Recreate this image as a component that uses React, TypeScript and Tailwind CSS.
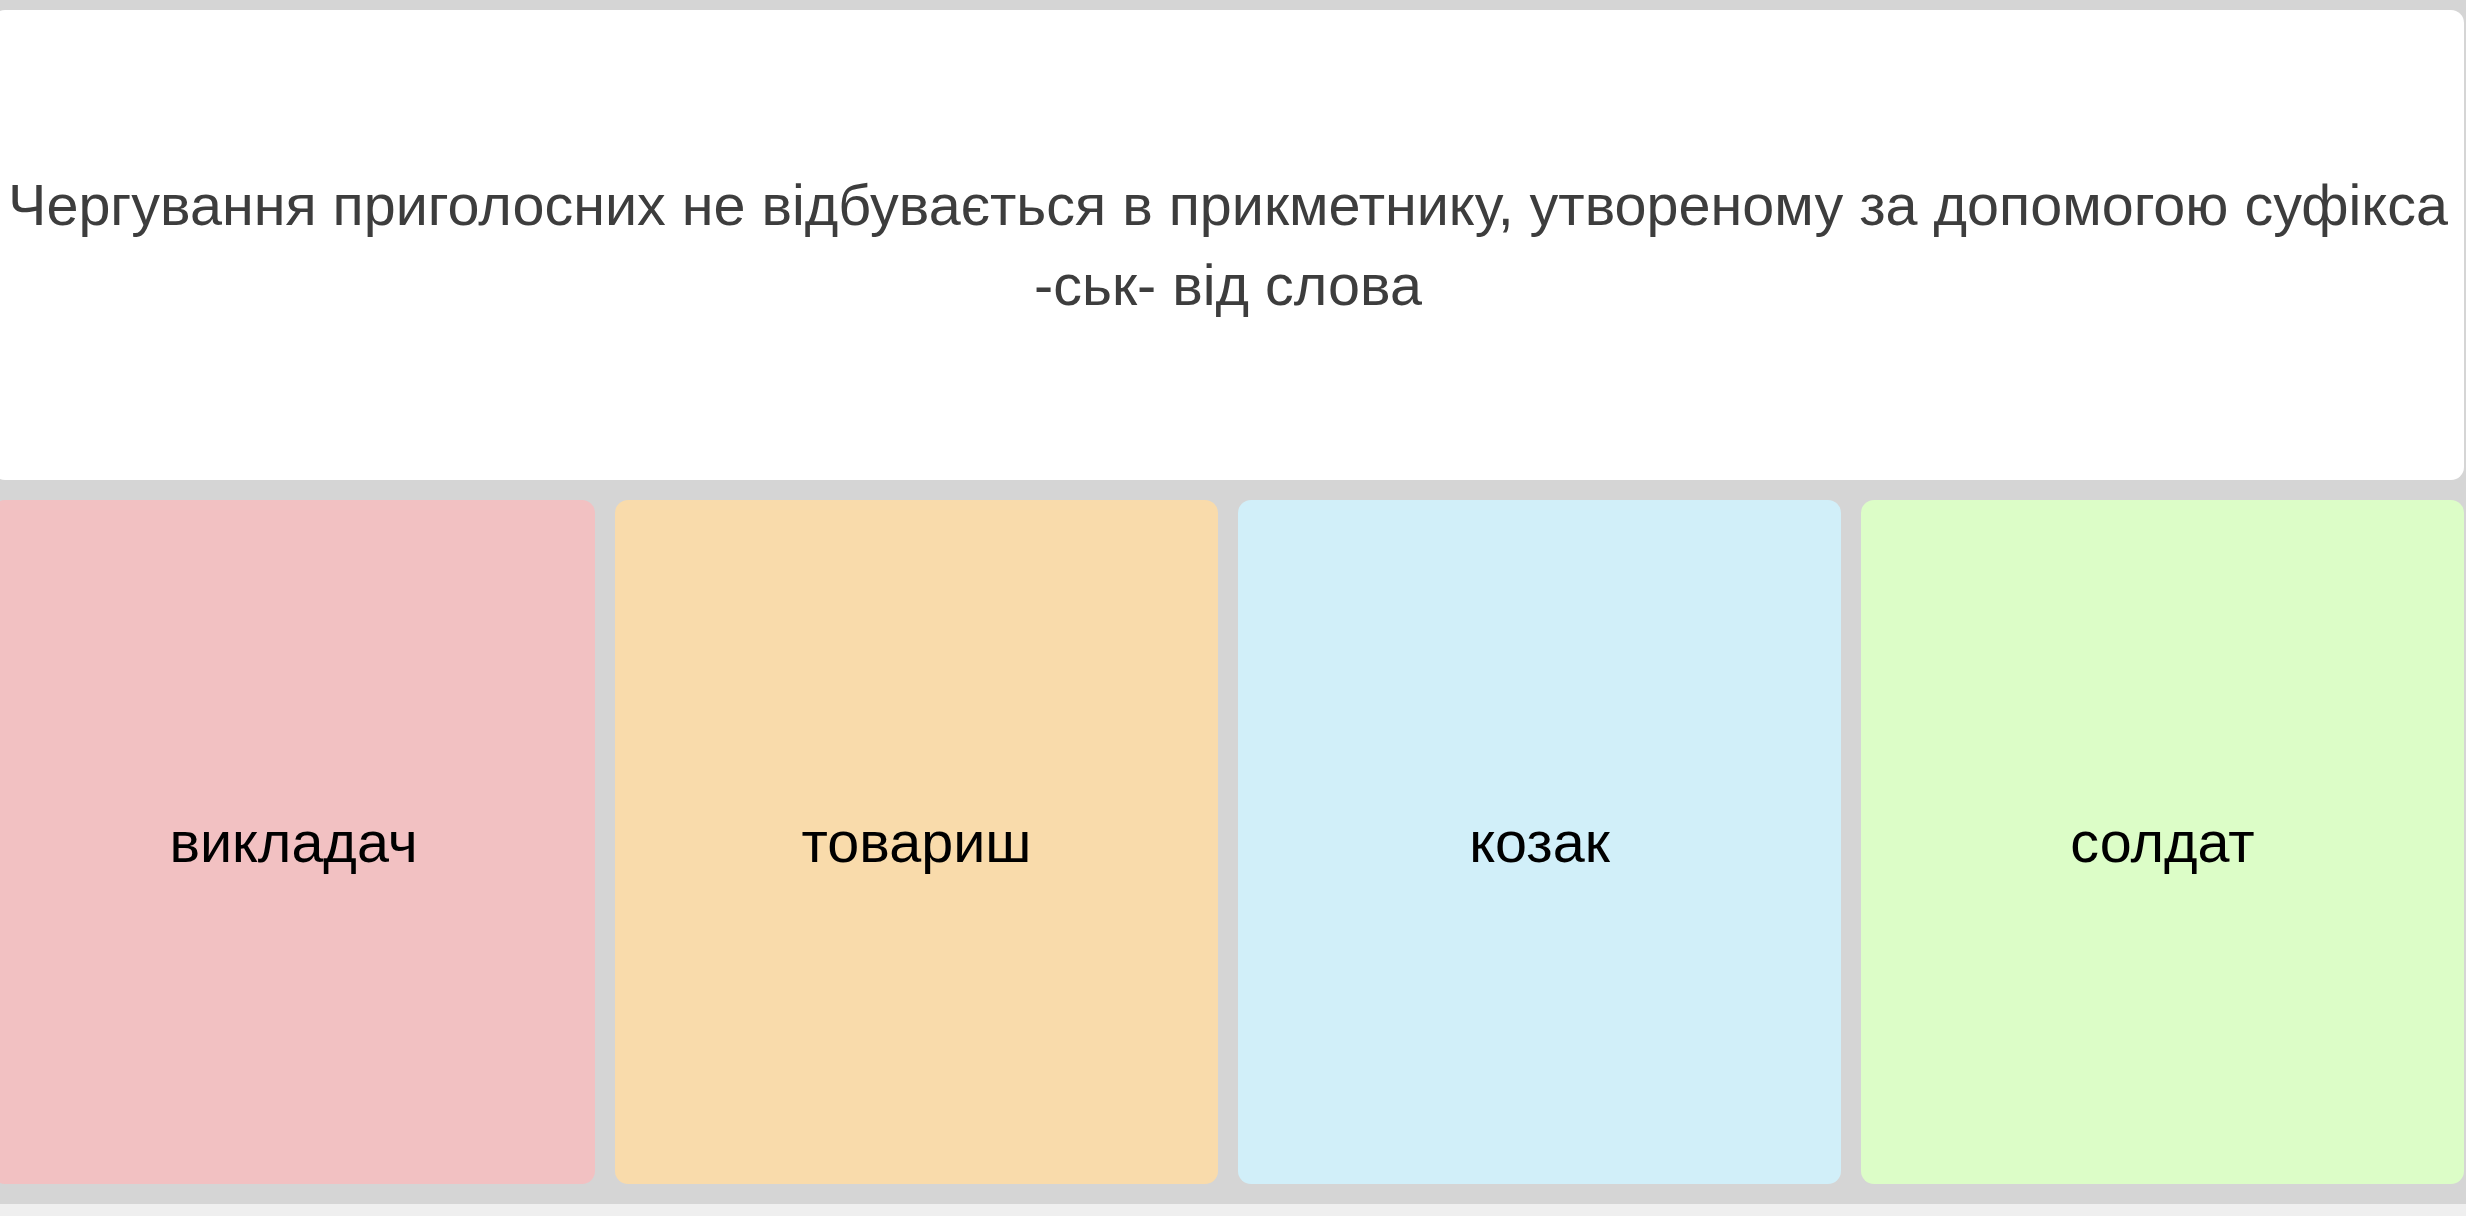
import React from 'react';

const answers = [
  { label: 'викладач', color: 'bg-[#f2c1c2]' },
  { label: 'товариш', color: 'bg-[#f9dbab]' },
  { label: 'козак', color: 'bg-[#d1eff9]' },
  { label: 'солдат', color: 'bg-[#dcfdc7]' },
];

export default function App() {
  return (
    <div className="min-h-screen bg-[#efefef] font-['Liberation_Sans',Arial,sans-serif] overflow-hidden">
      <div className="h-[1204px] bg-[#d5d5d5] pt-[10px] pr-[2px] ml-[-8px] flex flex-col gap-[20px]">
        {/* Question */}
        <div className="h-[470px] bg-white rounded-[13px] flex items-center justify-center px-[12px]">
          <p className="text-center text-[#3d3d3d] text-[57.5px] leading-[80px]">
            Чергування приголосних не відбувається в прикметнику, утвореному за допомогою суфікса -ськ- від слова
          </p>
        </div>

        {/* Answers */}
        <div className="grid grid-cols-4 gap-[20px] h-[684px]">
          {answers.map((a) => (
            <div key={a.label} className={`${a.color} rounded-[13px] flex items-center justify-center`}>
              <span className="text-black text-[57.5px]">{a.label}</span>
            </div>
          ))}
        </div>
      </div>
    </div>
  );
}
